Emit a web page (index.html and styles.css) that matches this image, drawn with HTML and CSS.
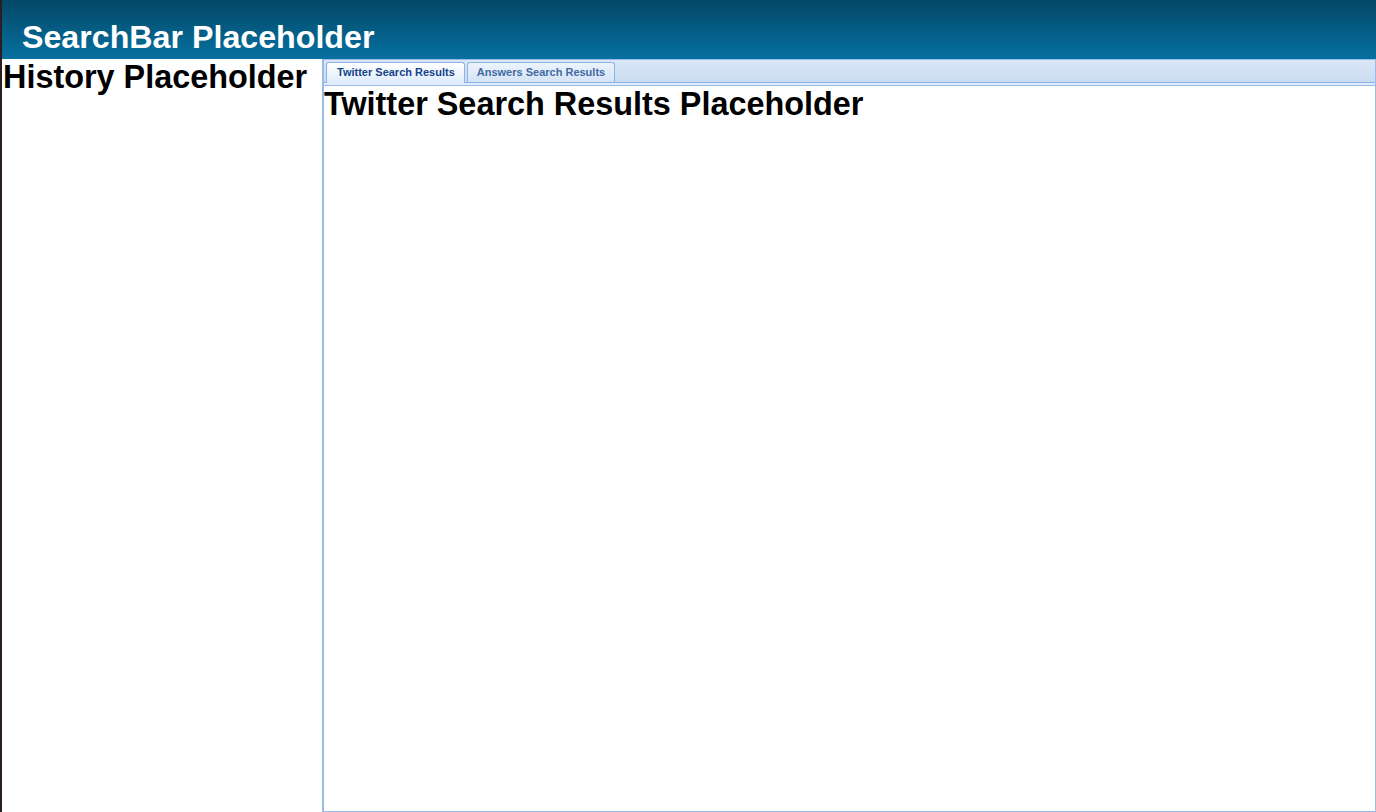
FILE: index.html
```html
<!DOCTYPE html>
<html>
<head>
<meta charset="utf-8">
<title>Search</title>
<link rel="stylesheet" href="styles.css">
</head>
<body>
<div class="app">
  <div class="edge"></div>
  <div class="main">
    <header class="header"><h1 class="header-title">SearchBar Placeholder</h1></header>
    <div class="body">
      <aside class="history"><h1 class="ph">History Placeholder</h1></aside>
      <section class="tabpanel">
        <div class="tabstrip">
          <div class="tab active">Twitter Search Results</div>
          <div class="tab">Answers Search Results</div>
        </div>
        <div class="spacer"></div>
        <div class="tabbody"><h1 class="ph">Twitter Search Results Placeholder</h1></div>
      </section>
    </div>
  </div>
</div>
</body>
</html>
```
FILE: styles.css
```css
html, body { margin: 0; padding: 0; height: 100%; }
body { font-family: "Liberation Sans", Arial, sans-serif; background: #fff; overflow: hidden; }
.app { display: flex; height: 812px; }
.edge { width: 2px; background: #2b1e22; flex: none; }
.main { flex: 1; display: flex; flex-direction: column; min-width: 0; }
.header {
  height: 59px; box-sizing: border-box; padding: 19px 0 0 20px;
  background: linear-gradient(#034866, #0670a1);
}
.header-title { margin: 0; color: #fff; font-size: 32.2px; font-weight: bold; line-height: 37px; }
.body { flex: 1; display: flex; min-height: 0; }
.history { width: 320px; flex: none; border-right: 1px solid #99bbe8; }
.ph { margin: 0; font-size: 32.4px; font-weight: bold; line-height: 37px; color: #000; }
.history .ph { padding-left: 1px; }
.tabpanel { flex: 1; display: flex; flex-direction: column; border: 1px solid #99bbe8; min-width: 0; }
.tabstrip {
  height: 22px; display: flex; align-items: flex-end; gap: 2px; padding: 0 0 0 2px;
  background: linear-gradient(#d9e6f6, #cbdcf2);
  border-bottom: 1px solid #8db2e3;
}
.tab {
  height: 20px; box-sizing: border-box; padding: 3px 9px 0 9px;
  border: 1px solid #8db2e3; border-bottom: none; border-radius: 3px 3px 0 0;
  font-size: 11px; font-weight: bold; color: #416aa3; line-height: 13px;
  background: linear-gradient(#ecf3fc, #d4e3f6);
}
.tab.active { color: #15428b; background: linear-gradient(#fff, #deecfd); height: 21px; padding-top: 3px; padding-left: 10px; margin-bottom: -1px; }
.spacer { height: 2px; background: #deecfd; border-bottom: 1px solid #99bbe8; }
.tabbody { flex: 1; background: #fff; }
```
